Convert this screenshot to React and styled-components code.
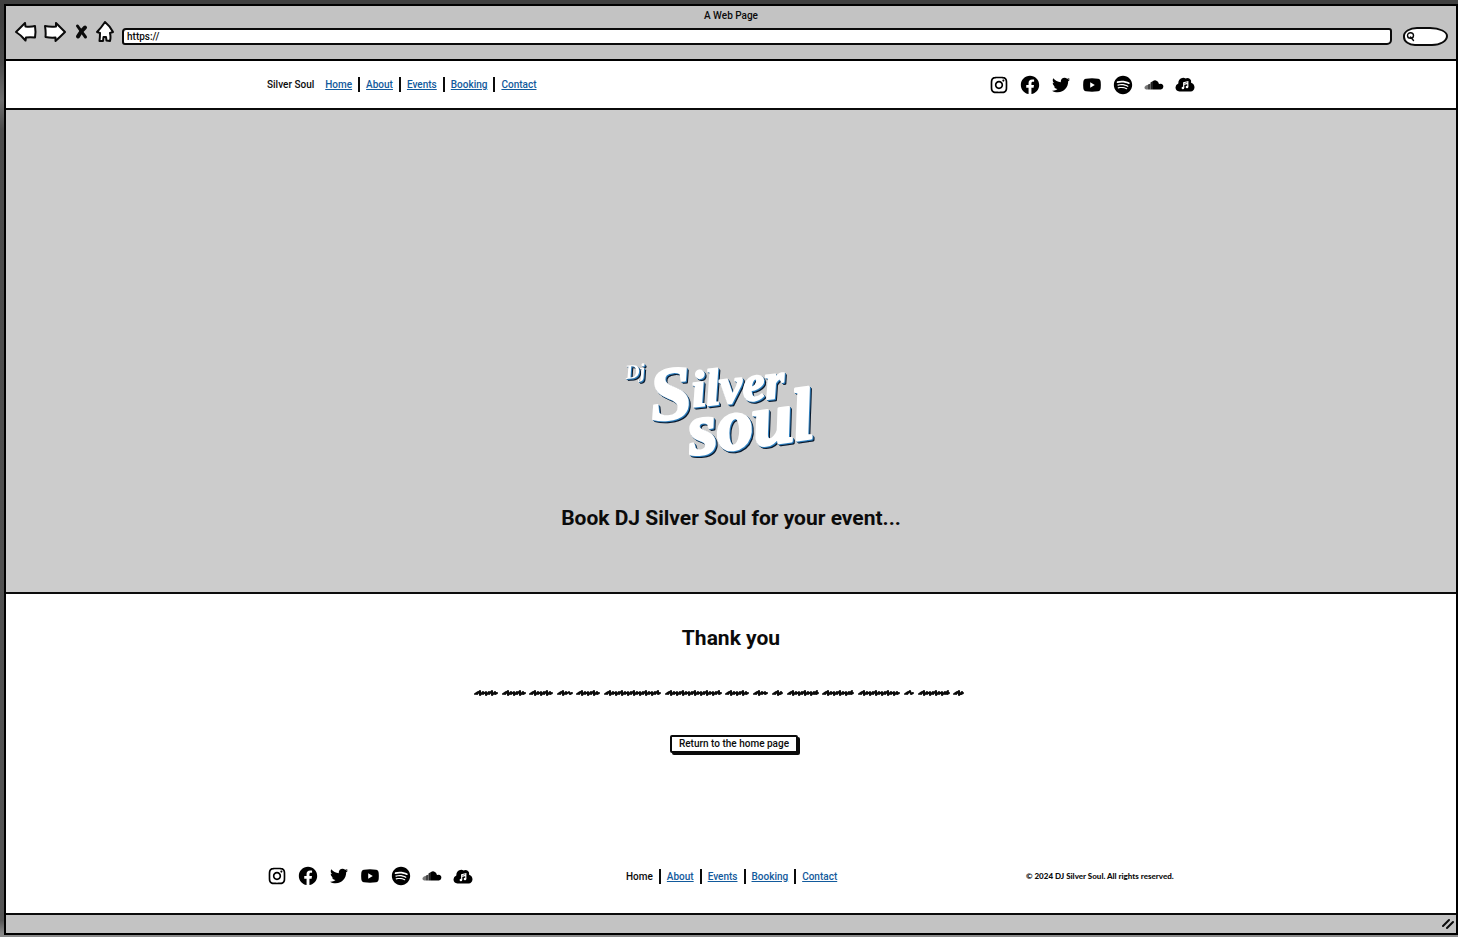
import React from "react";
import styled, { createGlobalStyle } from "styled-components";
import { RiInstagramLine, RiFacebookCircleFill, RiSpotifyFill } from "react-icons/ri";
import { FaTwitter } from "react-icons/fa";

const GlobalStyle = createGlobalStyle`
  *, *::before, *::after { box-sizing: border-box; }
  body {
    margin: 0;
    background: #ffffff;
    color: #0b0b0b;
    font-family: Roboto, "Open Sans", sans-serif;
    font-size: 10px;
    font-weight: 500;
  }
`;

const Desktop = styled.div`
  padding: 4px 0 2px 4px;
  background: linear-gradient(#404040 0 20px, #4c4c4c 64px, #6e6e6e 100px, #4a4a4a 130px, #555555 920px, #8a8a8a 934px);
`;

const BrowserWindow = styled.div`
  border: 2px solid #000000;
  background: #ffffff;
`;

const Chrome = styled.header`
  padding: 1px 8px 10px;
  border-bottom: 2px solid #000000;
  background: #c3c3c3;
`;

const WindowTitle = styled.div`
  height: 16px;
  line-height: 18px;
  text-align: center;
`;

const Toolbar = styled.div`
  display: flex;
  align-items: center;
  height: 26px;
`;

const BrowserButtons = styled.div`
  display: flex;
  align-items: center;
  gap: 7px;
  margin: 0 0 8px 1px;
`;

const IconButton = styled.button`
  display: flex;
  padding: 0;
  border: 0;
  background: none;
  cursor: pointer;
`;

const AddressBar = styled.input`
  flex: 1;
  min-width: 0;
  height: 17px;
  margin: 0 11px 0 8px;
  padding: 0 3px;
  border: 2px solid #0b0b0b;
  border-radius: 4px 3px 5px 3px;
  background: #ffffff;
  color: #0b0b0b;
  font: inherit;
`;

const SearchField = styled.label`
  display: flex;
  align-items: center;
  width: 45px;
  height: 19px;
  padding-left: 1px;
  border: 2px solid #0b0b0b;
  border-radius: 14px 18px 16px 12px / 9px 9px 10px 9px;
  background: #ffffff;
`;

const SearchInput = styled.input`
  width: 26px;
  height: 13px;
  padding: 0;
  border: 0;
  outline: 0;
  background: none;
  font: inherit;
`;

const SiteHeader = styled.div`
  padding: 0 24px;
  border-bottom: 2px solid #0b0b0b;
`;

const HeaderInner = styled.div`
  display: flex;
  align-items: center;
  justify-content: space-between;
  max-width: 928px;
  height: 47px;
  margin: 0 auto;
`;

const BrandGroup = styled.div`
  display: flex;
  align-items: center;
  gap: 11px;
`;

const LinkBar = styled.nav`
  display: flex;
  align-items: center;
`;

const NavItem = styled.span`
  padding: 0 6px;
  border-left: 2px solid #0b0b0b;
  line-height: 15px;

  &:first-child {
    padding-left: 0;
    border-left: 0;
  }
`;

const NavLink = styled.a`
  color: ${(p) => (p.$current ? "#0b0b0b" : "#125a9c")};
  text-decoration: ${(p) => (p.$current ? "none" : "underline")};
`;

const SocialList = styled.div`
  display: flex;
  align-items: center;
  gap: 11px;
`;

const SocialLink = styled.a`
  display: flex;
  align-items: center;
  justify-content: center;
  width: 20px;
  height: 22px;
  color: #000000;

  svg { flex: none; }
`;

const Hero = styled.section`
  display: flex;
  flex-direction: column;
  align-items: center;
  gap: 34px;
  padding: 240px 24px 60px;
  border-bottom: 2px solid #0b0b0b;
  background: #cccccc;
`;

const Heading = styled.h1`
  margin: 0;
  font-size: 21px;
  font-weight: 700;
  line-height: 28px;
  text-align: center;
`;

const LogoArt = styled.svg`
  display: block;
  overflow: visible;

  g {
    filter: drop-shadow(1px 1px 0 #2f7fbd) drop-shadow(1px 1px 0 #07172b);
  }

  text {
    fill: #ffffff;
    stroke: #ffffff;
    stroke-linejoin: round;
    font-family: "Liberation Serif", serif;
    font-style: italic;
    font-weight: 700;
  }
`;

const ThankYou = styled.section`
  padding: 30px 24px 110px;
`;

const Message = styled.div`
  display: flex;
  flex-direction: column;
  align-items: center;
  gap: 37px;
  padding-top: 36px;
`;

const ReturnButton = styled.button`
  height: 18px;
  margin-left: 6px;
  padding: 0 7px;
  border: 2px solid #0b0b0b;
  border-radius: 2px;
  background: #ffffff;
  box-shadow: 2px 2px 0 #0b0b0b;
  color: #0b0b0b;
  font: inherit;
  line-height: 14px;
  cursor: pointer;
`;

const Footer = styled.footer`
  padding: 2px 24px 26px;
`;

const FooterInner = styled.div`
  display: grid;
  grid-template-columns: 359fr 400fr 169fr;
  align-items: center;
  max-width: 928px;
  margin: 0 auto;
`;

const Copyright = styled.small`
  font-family: Lato, sans-serif;
  font-size: 8px;
  font-weight: 900;
  line-height: 12px;
  white-space: nowrap;
`;

const StatusBar = styled.div`
  display: flex;
  align-items: center;
  justify-content: flex-end;
  height: 20px;
  padding-right: 2px;
  border-top: 2px solid #0b0b0b;
  background: #c3c3c3;
`;

const sketch = { fill: "#ffffff", stroke: "#0b0b0b", strokeWidth: 2, strokeLinejoin: "round", strokeLinecap: "round" };

const BackIcon = () => (
  <svg width="22" height="20" viewBox="0 0 22 20" {...sketch}>
    <path d="M1 10 10 1 10.500 4.500 Q16 5 20 4 L20.500 10 20 15.500 Q15 15 11 15.500 L10.500 18.500 Q6 13 1 10Z" />
  </svg>
);
const ForwardIcon = () => (
  <svg width="22" height="20" viewBox="0 0 22 20" {...sketch}>
    <path d="M21 10 12 1 12 4.500 Q6 5 1 4 Q2 10 1.500 15 Q7 16 11.500 15.500 L11.500 19 Q16 15 21 10Z" />
  </svg>
);
const StopIcon = () => (
  <svg width="16" height="18" viewBox="0 0 16 18" fill="none" stroke="#0b0b0b" strokeLinecap="round">
    <path strokeWidth="3" d="M4.500 3Q8 8 12.500 14" />
    <path strokeWidth="4" d="M12 4.500Q8 8 5 13.500" />
  </svg>
);
const HomeIcon = () => (
  <svg width="18" height="22" viewBox="0 0 18 22" {...sketch}>
    <path d="M9 1 Q14 5 17 11 L14 12 Q15 16 14 20 L10.500 19.500 10 16 7.500 16 7 20 3.500 20 Q4 16 4 12 L1 11 Q5 7 9 1Z" />
  </svg>
);
const SearchIcon = () => (
  <svg width="10" height="11" viewBox="0 0 10 11" fill="none" stroke="#0b0b0b" strokeWidth="1.400" strokeLinecap="round">
    <ellipse cx="4.500" cy="4.500" rx="3" ry="2.800" />
    <path d="M4.500 6 7.500 9.500" />
  </svg>
);
const YoutubeIcon = () => (
  <svg width="18" height="14" viewBox="0 0 18 14">
    <path fill="currentColor" fillRule="evenodd" d="M3 .700Q9 0 15 .700Q17.500 1 17.700 4Q18 7 17.700 10Q17.500 13 15 13.300Q9 14 3 13.300Q.500 13 .300 10Q0 7 .300 4Q.500 1 3 .700ZM7.200 4.300V9.700L11.800 7Z" />
  </svg>
);
const SoundcloudIcon = () => (
  <svg width="20" height="10" viewBox="0 0 20 10">
    <path fill="currentColor" d="M9 9.500V1Q10.500 0 12 .500Q14.500 1.200 15 4Q17.500 3 19 5Q20.300 8.500 17 9.500Z" />
    <path fill="#222222" d="M6.500 9.500V2.500L9 1V9.500Z" />
    <path fill="#444444" d="M4 9.500V4.500Q5 4 6.500 3.800V9.500Z" />
    <path fill="#777777" d="M4 4.700V9.500H2Q0 8.500 .500 7Q1.500 5 4 4.700Z" />
  </svg>
);
const CloudMusicIcon = () => (
  <svg width="20" height="15" viewBox="0 0 20 15">
    <path fill="currentColor" d="M4.500 14.500Q.500 14 .500 10.300Q.700 7.300 3.300 6.400Q3.300 2.500 6.300 1.300Q8.500 .300 10.600 1.500Q12.800 .500 15 2Q16.600 3.300 16.100 5.700Q19.500 7 19.500 10.500Q19 14.200 15.700 14.500Z" />
    <path fill="none" stroke="#ffffff" strokeWidth="1.200" d="M8.700 11V5.700L12.800 4.700V9.800M8.700 7.300 12.800 6.300" />
    <circle cx="7.900" cy="11" r="1.300" fill="#ffffff" />
    <circle cx="12" cy="10" r="1.300" fill="#ffffff" />
  </svg>
);

const socials = [
  ["Instagram", <RiInstagramLine size={20} />],
  ["Facebook", <RiFacebookCircleFill size={22} />],
  ["Twitter", <FaTwitter size={18} />],
  ["YouTube", <YoutubeIcon />],
  ["Spotify", <RiSpotifyFill size={22} />],
  ["SoundCloud", <SoundcloudIcon />],
  ["Music cloud", <CloudMusicIcon />],
];

const Socials = () => (
  <SocialList>
    {socials.map(([name, icon]) => (
      <SocialLink key={name} href="#" aria-label={name}>{icon}</SocialLink>
    ))}
  </SocialList>
);

const pages = ["Home", "About", "Events", "Booking", "Contact"];

const Links = ({ current, label }) => (
  <LinkBar aria-label={label}>
    {pages.map((page) => (
      <NavItem key={page}>
        <NavLink href="#" $current={page === current}>{page}</NavLink>
      </NavItem>
    ))}
  </LinkBar>
);

const Logo = () => (
  <LogoArt width="242" height="120" viewBox="0 0 242 120" role="img" aria-label="DJ Silver Soul">
    <g>
      <text x="16" y="29" fontSize="20" strokeWidth="0" transform="rotate(-6 16 29)">Dj</text>
      <text x="42" y="71" fontSize="76" strokeWidth="2" transform="rotate(-6 42 71)">
        S<tspan fontSize="51" dy="-10">ilver</tspan>
      </text>
      <text x="81" y="105" fontSize="73" strokeWidth="3" transform="rotate(-8 81 105)">soul</text>
    </g>
  </LogoArt>
);

// Start and width of each scribbled placeholder word.
const words = [
  [0, 24], [28, 24], [55, 24], [83, 16], [102, 24], [130, 57], [191, 57], [251, 24],
  [279, 15], [298, 11], [313, 32], [348, 32], [384, 42], [430, 10], [444, 32], [479, 11],
];

const scribble = ([start, width]) => {
  let d = `M${start + 1} 6L${start + 4} 4`;
  for (let i = 4; i < width - 3; i += 3) {
    const x = start + i;
    d += `L${x - 1} ${i % 2 ? 7 : 6}L${x + 2} ${i % 4 ? 4 : 3}`;
  }
  return `${d}L${start + width - 3} 6L${start + width - 1} 5`;
};

const Scribbles = () => (
  <svg width="514" height="10" viewBox="0 0 514 10" role="img" aria-label="Placeholder message">
    {words.map((word) => (
      <path key={word[0]} d={scribble(word)} fill="none" stroke="#0b0b0b" strokeWidth="2" strokeLinecap="round" strokeLinejoin="round" />
    ))}
  </svg>
);

export default function App() {
  return (
    <Desktop>
      <GlobalStyle />
      <BrowserWindow>
        <Chrome>
          <WindowTitle>A Web Page</WindowTitle>
          <Toolbar>
            <BrowserButtons>
              <IconButton aria-label="Back"><BackIcon /></IconButton>
              <IconButton aria-label="Forward"><ForwardIcon /></IconButton>
              <IconButton aria-label="Stop"><StopIcon /></IconButton>
              <IconButton aria-label="Home page"><HomeIcon /></IconButton>
            </BrowserButtons>
            <AddressBar aria-label="Address" defaultValue="https://" />
            <SearchField>
              <SearchIcon />
              <SearchInput aria-label="Search" />
            </SearchField>
          </Toolbar>
        </Chrome>
        <SiteHeader>
          <HeaderInner>
            <BrandGroup>
              <span>Silver Soul</span>
              <Links label="Main" />
            </BrandGroup>
            <Socials />
          </HeaderInner>
        </SiteHeader>
        <main>
          <Hero>
            <Logo />
            <Heading>Book DJ Silver Soul for your event...</Heading>
          </Hero>
          <ThankYou>
            <Heading as="h2">Thank you</Heading>
            <Message>
              <Scribbles />
              <ReturnButton>Return to the home page</ReturnButton>
            </Message>
          </ThankYou>
        </main>
        <Footer>
          <FooterInner>
            <Socials />
            <Links label="Footer" current="Home" />
            <Copyright>© 2024 DJ Silver Soul. All rights reserved.</Copyright>
          </FooterInner>
        </Footer>
        <StatusBar>
          <svg width="12" height="12" viewBox="0 0 12 12" stroke="#0b0b0b" strokeWidth="2" strokeLinecap="round">
            <path d="M1 8 7 2M5 10 11 4" />
          </svg>
        </StatusBar>
      </BrowserWindow>
    </Desktop>
  );
}
